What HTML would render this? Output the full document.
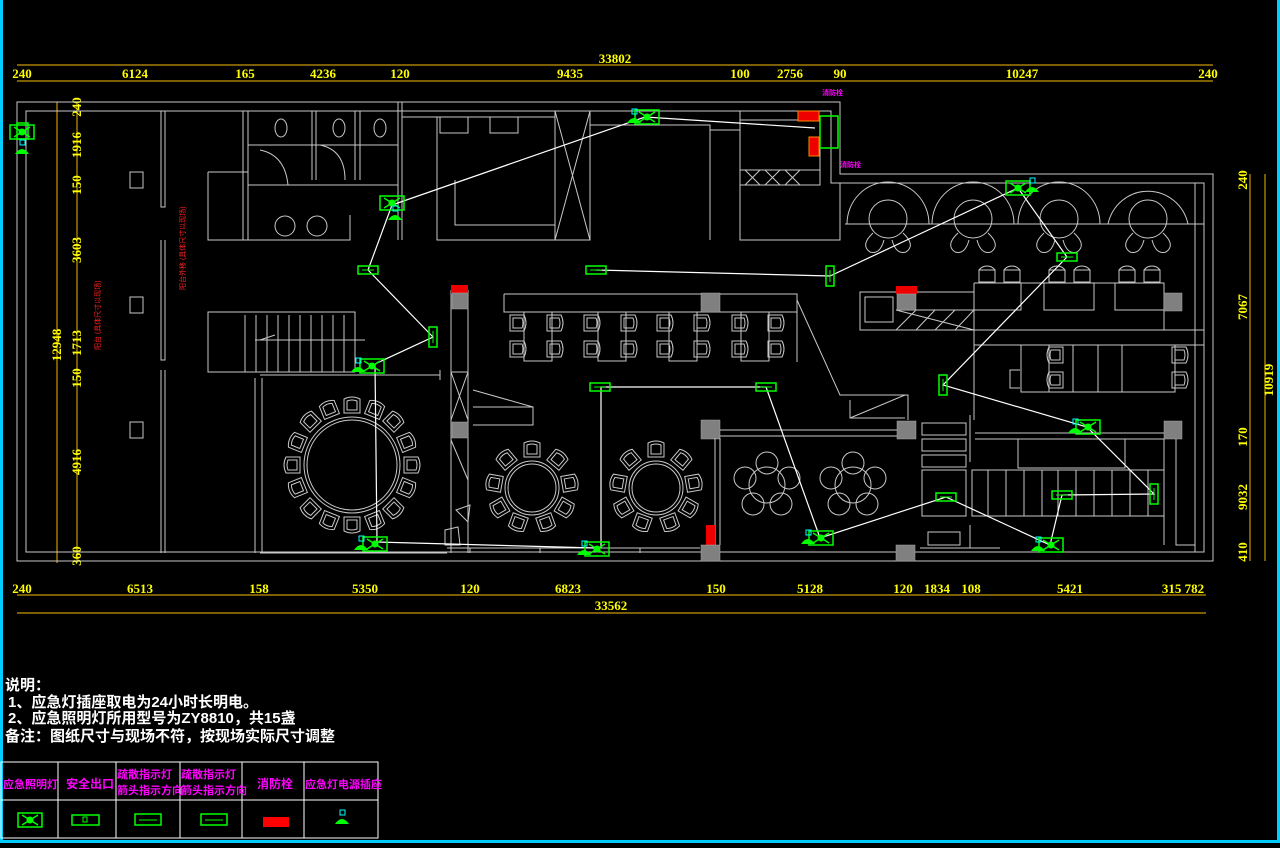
<!DOCTYPE html>
<html><head><meta charset="utf-8"><style>
html,body{margin:0;padding:0;background:#000;width:1280px;height:848px;overflow:hidden}
svg{display:block}
.w{fill:none;stroke:#c8c8c8;stroke-width:1}
.d{fill:none;stroke:#c89600;stroke-width:1.2}
.t{fill:#ffff00;font-family:"Liberation Serif",serif;font-weight:bold;font-size:13px}
.g{fill:none;stroke:#00ff00;stroke-width:1.5}
.c{fill:#808080;stroke:#aaa;stroke-width:.5}
.l{fill:none;stroke:#fff;stroke-width:1.2}
.n{fill:#fff;font-family:"Liberation Sans","Noto Sans CJK SC",sans-serif;font-size:15px;font-weight:bold}
.m{fill:#ff00ff;font-family:"Liberation Sans","Noto Sans CJK SC",sans-serif;font-size:12px;font-weight:bold}
</style></head><body>
<svg width="1280" height="848" viewBox="0 0 1280 848">
<defs>
<g id="ch"><path class="w" d="M-8,-8 H6 Q10,0 6,8 H-8 Z M-5,-5 H4 Q6,0 4,5 H-5 Z"/></g>
<g id="el"><rect x="-12" y="-7" width="24" height="14" fill="none" stroke="#00ff00" stroke-width="1.5"/><path d="M-8,-5 L8,5 M-8,5 L8,-5" stroke="#00ff00" stroke-width="1.5"/><circle r="3.5" fill="#00ff00"/></g>
<g id="ex"><rect x="-10" y="-4" width="20" height="8" fill="none" stroke="#00ff00" stroke-width="1.5"/><path d="M-6,0 H6" stroke="#00ff00"/></g>
<g id="ev"><rect x="-4" y="-10" width="8" height="20" fill="none" stroke="#00ff00" stroke-width="1.5"/><path d="M0,-6 V6" stroke="#00ff00"/></g>
<g id="so"><path d="M-7,4 Q0,-6 7,4 Z" fill="#00ff00"/><rect x="-2" y="-10" width="5" height="5" fill="none" stroke="#00ffff"/></g>
<g id="bc"><rect x="-8" y="-6" width="16" height="12" class="w"/><path class="w" d="M-8,-6 Q-5,-10 0,-10 Q5,-10 8,-6"/></g>
</defs>

<rect x="0" y="0" width="3" height="843" fill="#00ccff"/>
<rect x="1277" y="0" width="3" height="843" fill="#00ccff"/>
<rect x="0" y="840" width="1280" height="3" fill="#00ccff"/>

<path class="d" d="M17,65 H1213 M17,81 H1213"/>
<text class="t" x="615" y="63" text-anchor="middle">33802</text>
<g class="t" text-anchor="middle">
<text x="22" y="78">240</text><text x="135" y="78">6124</text><text x="245" y="78">165</text><text x="323" y="78">4236</text><text x="400" y="78">120</text><text x="570" y="78">9435</text><text x="740" y="78">100</text><text x="790" y="78">2756</text><text x="840" y="78">90</text><text x="1022" y="78">10247</text><text x="1208" y="78">240</text>
</g>
<path class="d" d="M17,595 H1206 M17,613 H1206"/>
<g class="t" text-anchor="middle">
<text x="22" y="593">240</text><text x="140" y="593">6513</text><text x="259" y="593">158</text><text x="365" y="593">5350</text><text x="470" y="593">120</text><text x="568" y="593">6823</text><text x="716" y="593">150</text><text x="810" y="593">5128</text><text x="903" y="593">120</text><text x="937" y="593">1834</text><text x="971" y="593">108</text><text x="1070" y="593">5421</text><text x="1183" y="593">315 782</text>
<text x="611" y="610">33562</text>
</g>
<path class="d" d="M57,102 V563 M77,102 V563"/>
<g class="t" text-anchor="middle">
<text transform="translate(81,107) rotate(-90)">240</text>
<text transform="translate(81,145) rotate(-90)">1916</text>
<text transform="translate(81,185) rotate(-90)">150</text>
<text transform="translate(81,250) rotate(-90)">3603</text>
<text transform="translate(81,343) rotate(-90)">1713</text>
<text transform="translate(81,378) rotate(-90)">150</text>
<text transform="translate(81,462) rotate(-90)">4916</text>
<text transform="translate(81,556) rotate(-90)">360</text>
<text transform="translate(61,345) rotate(-90)">12948</text>
</g>
<path class="d" d="M1250,174 V561 M1265,174 V561"/>
<g class="t" text-anchor="middle">
<text transform="translate(1247,180) rotate(-90)">240</text>
<text transform="translate(1247,307) rotate(-90)">7067</text>
<text transform="translate(1247,437) rotate(-90)">170</text>
<text transform="translate(1247,497) rotate(-90)">9032</text>
<text transform="translate(1247,552) rotate(-90)">410</text>
<text transform="translate(1273,380) rotate(-90)">10919</text>
</g>

<path class="w" d="M17,102 H840 V174 H1213 V561 H17 Z"/>
<path class="w" d="M26,111 H831 V183 H1204 V552 H26 Z"/>
<path class="w" d="M161,111 V207 H165 V111 M161,240 V360 H165 V240 M161,370 V553 M165,370 V553"/>
<rect class="w" x="130" y="172" width="13" height="16"/><rect class="w" x="130" y="297" width="13" height="16"/><rect class="w" x="130" y="422" width="13" height="16"/>
<text fill="#ff2020" style="font-size:7px" font-family="Liberation Sans,Noto Sans CJK SC,sans-serif" transform="translate(100,350) rotate(-90)">阳台 (具体尺寸以现场)</text>
<text fill="#ff2020" style="font-size:7px" font-family="Liberation Sans,Noto Sans CJK SC,sans-serif" transform="translate(185,290) rotate(-90)">阳台外移 (具体尺寸以现场)</text>
<path class="w" d="M243,111 V240 M248,111 V240 M312,111 V180 M316,111 V180 M355,111 V180 M360,111 V180 M398,111 V240 M402,102 V240 M208,172 H248 V240 H350 V215 M208,172 V240 H248 M248,145 H398 M248,185 H398 M320,145 Q345,150 345,180 M260,150 Q285,155 288,185"/>
<circle class="w" cx="285" cy="226" r="10"/><circle class="w" cx="317" cy="226" r="10"/>
<ellipse class="w" cx="281" cy="128" rx="6" ry="9"/><ellipse class="w" cx="339" cy="128" rx="6" ry="9"/><ellipse class="w" cx="380" cy="128" rx="6" ry="9"/>
<path class="w" d="M398,102 V111 H555 M402,117 H555 M437,117 V240 H555 M455,180 V225 H555 M555,111 V240 H590 V111 M555,111 L590,240 M590,111 L555,240 M590,125 H710 V240 M710,130 H740 V240 M740,111 V240 H840 V185 M740,120 H820 V185 H740 M740,170 H820"/>
<rect class="w" x="440" y="117" width="28" height="16"/><rect class="w" x="490" y="117" width="28" height="16"/>
<path class="w" d="M745,170 L760,185 M760,170 L745,185 M765,170 L780,185 M780,170 L765,185 M785,170 L800,185 M800,170 L785,185"/>
<rect x="798" y="111" width="21" height="10" fill="#e00" stroke="#f80"/><rect x="809" y="137" width="10" height="19" fill="#e00" stroke="#f80"/>
<rect class="g" x="820" y="116" width="18" height="32"/>
<text class="m" x="822" y="95" style="font-size:7px">消防栓</text><text class="m" x="840" y="167" style="font-size:7px">消防栓</text>
<path class="w" d="M208,312 H355 V372 H208 Z M245,315 V372 M256,315 V372 M267,315 V372 M278,315 V372 M289,315 V372 M300,315 V372 M311,315 V372 M322,315 V372 M333,315 V372 M344,315 V372 M260,340 L275,335 M255,340 H365"/>
<path class="w" d="M260,375 H440 M262,378 V553 M255,378 V553 M440,370 V380 M260,553 H447"/>
<circle class="w" cx="352" cy="465" r="48"/><circle class="w" cx="352" cy="465" r="45"/>
<g>
<use href="#ch" transform="translate(352,405) rotate(-90)"/><use href="#ch" transform="translate(375,409) rotate(-68)"/><use href="#ch" transform="translate(394,421) rotate(-45)"/><use href="#ch" transform="translate(407,442) rotate(-22)"/><use href="#ch" transform="translate(412,465)"/><use href="#ch" transform="translate(407,488) rotate(22)"/><use href="#ch" transform="translate(394,509) rotate(45)"/><use href="#ch" transform="translate(375,521) rotate(68)"/><use href="#ch" transform="translate(352,525) rotate(90)"/><use href="#ch" transform="translate(329,521) rotate(112)"/><use href="#ch" transform="translate(310,509) rotate(135)"/><use href="#ch" transform="translate(297,488) rotate(158)"/><use href="#ch" transform="translate(292,465) rotate(180)"/><use href="#ch" transform="translate(297,442) rotate(202)"/><use href="#ch" transform="translate(310,421) rotate(225)"/><use href="#ch" transform="translate(329,409) rotate(248)"/>
</g>
<path class="w" d="M451,290 V553 M468,290 V553 M451,372 H468 M451,372 L468,420 M468,372 L451,420 M451,440 L468,480 M473,407 H533 V425 H473 M473,390 L533,407"/>
<rect x="451" y="285" width="17" height="9" fill="#e00"/><rect class="c" x="452" y="293" width="16" height="16"/><rect class="c" x="452" y="422" width="16" height="16"/>
<path class="w" d="M504,294 H797 V362 M504,294 V312 H797 M797,300 L840,395 H908 V420"/>
<rect class="c" x="701" y="293" width="19" height="19"/>
<g>
<use href="#ch" transform="translate(518,323)"/><use href="#ch" transform="translate(555,323)"/><use href="#ch" transform="translate(592,323)"/><use href="#ch" transform="translate(629,323)"/><use href="#ch" transform="translate(665,323)"/><use href="#ch" transform="translate(702,323)"/><use href="#ch" transform="translate(740,323)"/><use href="#ch" transform="translate(776,323)"/>
<use href="#ch" transform="translate(518,349)"/><use href="#ch" transform="translate(555,349)"/><use href="#ch" transform="translate(592,349)"/><use href="#ch" transform="translate(629,349)"/><use href="#ch" transform="translate(665,349)"/><use href="#ch" transform="translate(702,349)"/><use href="#ch" transform="translate(740,349)"/><use href="#ch" transform="translate(776,349)"/>
</g>
<path class="w" d="M524,312 V361 H552 V312 M598,312 V361 H626 V312 M669,312 V361 H697 V312 M741,312 V361 H769 V312"/>
<circle class="w" cx="532" cy="488" r="27"/><circle class="w" cx="532" cy="488" r="24"/>
<circle class="w" cx="656" cy="488" r="27"/><circle class="w" cx="656" cy="488" r="24"/>
<g>
<use href="#ch" transform="translate(532,449) rotate(-90)"/><use href="#ch" transform="translate(558,459) rotate(-50)"/><use href="#ch" transform="translate(570,483) rotate(-10)"/><use href="#ch" transform="translate(565,508) rotate(30)"/><use href="#ch" transform="translate(546,523) rotate(70)"/><use href="#ch" transform="translate(518,523) rotate(110)"/><use href="#ch" transform="translate(499,508) rotate(150)"/><use href="#ch" transform="translate(494,483) rotate(190)"/><use href="#ch" transform="translate(506,459) rotate(230)"/>
<use href="#ch" transform="translate(656,449) rotate(-90)"/><use href="#ch" transform="translate(682,459) rotate(-50)"/><use href="#ch" transform="translate(694,483) rotate(-10)"/><use href="#ch" transform="translate(689,508) rotate(30)"/><use href="#ch" transform="translate(670,523) rotate(70)"/><use href="#ch" transform="translate(642,523) rotate(110)"/><use href="#ch" transform="translate(623,508) rotate(150)"/><use href="#ch" transform="translate(618,483) rotate(190)"/><use href="#ch" transform="translate(630,459) rotate(230)"/>
</g>
<path class="w" d="M456,510 L470,505 L468,522 Z M445,530 L458,527 L460,545 L445,545 Z"/>
<rect class="c" x="701" y="420" width="19" height="19"/>
<path class="w" d="M715,438 V545 M720,438 V545 M720,430 H906 M720,436 H906"/>
<g class="w">
<circle cx="767" cy="485" r="18"/><circle cx="767" cy="463" r="11"/><circle cx="789" cy="478" r="11"/><circle cx="781" cy="504" r="11"/><circle cx="753" cy="504" r="11"/><circle cx="745" cy="478" r="11"/>
<circle cx="853" cy="485" r="18"/><circle cx="853" cy="463" r="11"/><circle cx="875" cy="478" r="11"/><circle cx="867" cy="504" r="11"/><circle cx="839" cy="504" r="11"/><circle cx="831" cy="478" r="11"/>
</g>
<rect x="706" y="525" width="9" height="20" fill="#e00"/>
<path class="w" d="M447,548 H700 M470,553 V548 M540,553 V548 M640,553 V548 M920,548 H1000"/>
<rect class="c" x="701" y="545" width="19" height="16"/><rect class="c" x="896" y="545" width="19" height="16"/>
<path class="w" d="M840,183 V240 M845,224 H1204 M1195,183 V552"/>
<g class="w">
<path d="M847,224 A41,42 0 0 1 929,224"/><circle cx="888" cy="219" r="19"/><path d="M873,233 Q860,245 870,252 Q880,255 884,240 M903,233 Q916,245 906,252 Q896,255 892,240"/>
<path d="M932,224 A41,42 0 0 1 1014,224"/><circle cx="973" cy="219" r="19"/><path d="M958,233 Q945,245 955,252 Q965,255 969,240 M988,233 Q1001,245 991,252 Q981,255 977,240"/>
<path d="M1018,224 A41,42 0 0 1 1100,224"/><circle cx="1059" cy="219" r="19"/><path d="M1044,233 Q1031,245 1041,252 Q1051,255 1055,240 M1074,233 Q1087,245 1077,252 Q1067,255 1063,240"/>
<path d="M1108,224 A41,42 0 0 1 1188,224"/><circle cx="1148" cy="219" r="19"/><path d="M1133,233 Q1120,245 1130,252 Q1140,255 1144,240 M1163,233 Q1176,245 1166,252 Q1156,255 1152,240"/>
</g>
<path class="w" d="M860,292 H974 V330 H860 Z M865,297 H893 V322 H865 Z M896,310 H974 M896,310 L974,330 M916,310 L896,330 M935,310 L916,330 M955,310 L935,330 M974,310 L955,330"/>
<rect x="896" y="286" width="21" height="8" fill="#e00"/><rect class="c" x="897" y="294" width="19" height="16"/>
<path class="w" d="M974,283 H1164 V330 M974,330 H1204 M974,345 H1204 M974,330 V420 M974,283 V300 M1021,283 V310 H974 M1044,283 V310 H1094 V283 M1115,283 V310 H1164"/>
<g><use href="#bc" transform="translate(987,276)"/><use href="#bc" transform="translate(1012,276)"/><use href="#bc" transform="translate(1057,276)"/><use href="#bc" transform="translate(1082,276)"/><use href="#bc" transform="translate(1127,276)"/><use href="#bc" transform="translate(1152,276)"/></g>
<rect class="c" x="1164" y="293" width="18" height="18"/>
<path class="w" d="M1021,345 V392 H1175 V345 M1049,345 V392 M1073,345 V392 M1098,345 V392 M1122,345 V392 M1020,370 H1010 V388 H1020"/>
<use href="#ch" transform="translate(1055,355) rotate(180)"/><use href="#ch" transform="translate(1055,380) rotate(180)"/><use href="#ch" transform="translate(1180,355)"/><use href="#ch" transform="translate(1180,380)"/>
<path class="w" d="M845,395 H908 V420 M850,400 V418 H905 M905,395 L850,418"/>
<rect class="c" x="897" y="421" width="19" height="18"/><rect class="c" x="1164" y="421" width="18" height="18"/>
<path class="w" d="M922,423 H966 V435 H922 Z M922,439 H966 V451 H922 Z M922,455 H966 V467 H922 Z M922,470 H966 V516 H922 Z M928,532 H960 V545 H928 Z M970,415 V462 M970,525 V548 M975,433 H1164 M975,439 H1164 M1018,439 V468 H1125 V439 M1164,439 V545 M1176,439 V545 H1195"/>
<path class="w" d="M972,470 H1164 V516 H972 Z M988,470 V516 M1006,470 V516 M1024,470 V516 M1042,470 V516 M1058,470 V516 M1076,470 V516 M1094,470 V516 M1112,470 V516 M1130,470 V516 M1148,470 V516"/>
<rect class="g" x="17" y="123" width="11" height="16"/>

<path class="l" d="M392,205 L645,117 L815,128 M392,205 L368,270 L433,337 L375,364 L377,542 L596,548 M601,548 V387 H766 L820,538 L946,497 L1050,545 L1062,495 L1154,494 L1087,427 L943,385 L1067,257 L1018,188 L830,276 L596,270"/>
<use href="#el" x="22" y="132"/><use href="#so" x="22" y="150"/>
<use href="#el" x="392" y="203"/><use href="#so" x="395" y="216"/>
<use href="#el" x="647" y="117"/><use href="#so" x="634" y="119"/>
<use href="#el" x="1018" y="188"/><use href="#so" x="1032" y="188"/>
<use href="#el" x="372" y="366"/><use href="#so" x="358" y="368"/>
<use href="#el" x="375" y="544"/><use href="#so" x="361" y="546"/>
<use href="#el" x="597" y="549"/><use href="#so" x="584" y="551"/>
<use href="#el" x="821" y="538"/><use href="#so" x="808" y="540"/>
<use href="#el" x="1088" y="427"/><use href="#so" x="1075" y="429"/>
<use href="#el" x="1051" y="545"/><use href="#so" x="1038" y="547"/>
<use href="#ex" x="368" y="270"/><use href="#ex" x="596" y="270"/><use href="#ex" x="600" y="387"/><use href="#ex" x="766" y="387"/><use href="#ex" x="946" y="497"/><use href="#ex" x="1062" y="495"/><use href="#ex" x="1067" y="257"/>
<use href="#ev" x="433" y="337"/><use href="#ev" x="830" y="276"/><use href="#ev" x="943" y="385"/><use href="#ev" x="1154" y="494"/>

<text class="n" x="5" y="690">说明：</text>
<text class="n" x="8" y="707">1、应急灯插座取电为24小时长明电。</text>
<text class="n" x="8" y="723">2、应急照明灯所用型号为ZY8810，共15盏</text>
<text class="n" x="5" y="741">备注：图纸尺寸与现场不符，按现场实际尺寸调整</text>

<path d="M1,762 H378 V838 H1 Z M1,800 H378 M58,762 V838 M116,762 V838 M180,762 V838 M242,762 V838 M304,762 V838" fill="none" stroke="#fff" stroke-width="1"/>
<g class="m">
<text x="3" y="788" style="font-size:11px">应急照明灯</text>
<text x="66" y="788">安全出口</text>
<text x="117" y="778" style="font-size:11px">疏散指示灯</text><text x="117" y="794" style="font-size:11px">箭头指示方向</text>
<text x="181" y="778" style="font-size:11px">疏散指示灯</text><text x="181" y="794" style="font-size:11px">箭头指示方向</text>
<text x="257" y="788">消防栓</text>
<text x="305" y="788" style="font-size:11px">应急灯电源插座</text>
</g>
<use href="#el" x="30" y="820"/>
<rect x="72" y="815" width="27" height="10" fill="none" stroke="#00ff00" stroke-width="1.5"/><rect x="83" y="817" width="4" height="5" fill="none" stroke="#00ff00"/>
<rect x="135" y="814" width="26" height="11" fill="none" stroke="#00ff00" stroke-width="1.5"/><path d="M139,820 H157" stroke="#00ff00"/>
<rect x="201" y="814" width="26" height="11" fill="none" stroke="#00ff00" stroke-width="1.5"/><path d="M205,820 H223" stroke="#00ff00"/>
<rect x="263" y="817" width="26" height="10" fill="#f00"/>
<use href="#so" x="342" y="820"/>
</svg>
</body></html>
